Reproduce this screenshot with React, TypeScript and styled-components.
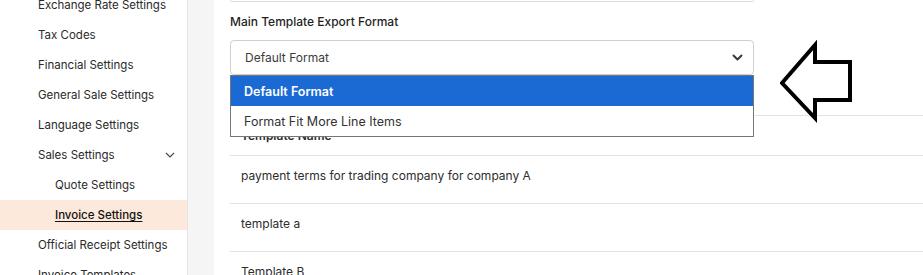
import React from 'react';
import styled, { createGlobalStyle } from 'styled-components';

const GlobalStyle = createGlobalStyle`
  html, body {
    margin: 0;
    padding: 0;
    background: #ffffff;
    overflow: hidden;
  }
  body {
    font-family: Inter, "Noto Sans", "Liberation Sans", sans-serif;
    color: #2d2d2d;
  }
`;

const Page = styled.div`
  display: flex;
  height: 275px;
  overflow: hidden;
`;

const Sidebar = styled.nav`
  width: 187px;
  flex-shrink: 0;
  border-right: 1px solid #e4e4e4;
  background: #fff;
  overflow: hidden;
`;

const NavList = styled.ul`
  list-style: none;
  margin: -10px 0 0;
  padding: 0;
`;

const NavItem = styled.li<{ $sub?: boolean; $active?: boolean }>`
  display: flex;
  align-items: center;
  justify-content: space-between;
  height: 30px;
  padding: 0 12px 0 ${(p) => (p.$sub ? '55px' : '38px')};
  font-size: 11.5px;
  color: ${(p) => (p.$active ? '#111' : '#2a2a2a')};
  font-weight: ${(p) => (p.$active ? 500 : 400)};
  text-decoration: ${(p) => (p.$active ? 'underline' : 'none')};
  text-underline-offset: 2px;
  background: ${(p) => (p.$active ? '#fde9db' : 'transparent')};
  white-space: nowrap;
`;

const Gutter = styled.div`
  width: 26px;
  flex-shrink: 0;
  background: #f5f5f5;
`;

const Panel = styled.main`
  position: relative;
  flex: 1;
  background: #fff;
  padding-left: 16px;
  min-width: 0;
`;

const PrevField = styled.div`
  width: 522px;
  height: 1px;
  border: 1px solid #dcdcdc;
  border-top: none;
  border-radius: 0 0 4px 4px;
`;

const Label = styled.div`
  margin-top: 12px;
  font-size: 12px;
  line-height: 16px;
  font-weight: 500;
  color: #1f1f1f;
`;

const SelectWrap = styled.div`
  position: relative;
  width: 524px;
  margin-top: 10px;
`;

const SelectBox = styled.div`
  display: flex;
  align-items: center;
  justify-content: space-between;
  height: 33px;
  padding: 0 10px 0 14px;
  border: 1px solid #cfcfcf;
  border-radius: 4px;
  font-size: 12px;
  color: #3c3c3c;
`;

const Menu = styled.ul`
  position: absolute;
  top: 35px;
  left: 0;
  width: 522px;
  margin: 0;
  padding: 0;
  list-style: none;
  background: #fff;
  border: 1px solid #767676;
  z-index: 5;
`;

const Option = styled.li<{ $selected?: boolean }>`
  height: 30px;
  display: flex;
  align-items: center;
  padding-left: 13px;
  font-size: 12.5px;
  font-weight: ${(p) => (p.$selected ? 600 : 400)};
  color: ${(p) => (p.$selected ? '#fff' : '#333')};
  background: ${(p) => (p.$selected ? '#1b69d3' : '#fff')};
`;

const Table = styled.div`
  margin-top: 40px;
  border-top: 1px solid #e2e2e2;
`;

const Row = styled.div<{ $head?: boolean }>`
  box-sizing: border-box;
  height: ${(p) => (p.$head ? '40px' : '48px')};
  padding: 12px 0 0 11px;
  line-height: 16px;
  border-bottom: 1px solid #e2e2e2;
  font-size: 12px;
  font-weight: ${(p) => (p.$head ? 600 : 400)};
  color: #2d2d2d;
`;

const Arrow = styled.svg`
  position: absolute;
  left: 566px;
  top: 40px;
`;

const Chevron = () => (
  <svg width="10" height="6" viewBox="0 0 10 6" fill="none">
    <path d="M1 1l4 4 4-4" stroke="#444" strokeWidth="1.1" />
  </svg>
);

const SelectChevron = () => (
  <svg width="11" height="7" viewBox="0 0 11 7" fill="none">
    <path d="M1.5 1.5l4 4 4-4" stroke="#3a3a3a" strokeWidth="2" strokeLinecap="round" strokeLinejoin="round" />
  </svg>
);

const navItems = [
  { label: 'Exchange Rate Settings' },
  { label: 'Tax Codes' },
  { label: 'Financial Settings' },
  { label: 'General Sale Settings' },
  { label: 'Language Settings' },
  { label: 'Sales Settings', open: true },
  { label: 'Quote Settings', sub: true },
  { label: 'Invoice Settings', sub: true, active: true },
  { label: 'Official Receipt Settings' },
  { label: 'Invoice Templates' },
];

const App = () => {
  return (
    <>
      <GlobalStyle />
      <Page>
        <Sidebar>
          <NavList>
            {navItems.map((item) => (
              <NavItem key={item.label} $sub={item.sub} $active={item.active}>
                <span>{item.label}</span>
                {item.open && <Chevron />}
              </NavItem>
            ))}
          </NavList>
        </Sidebar>
        <Gutter />
        <Panel>
          <PrevField />
          <Label>Main Template Export Format</Label>
          <SelectWrap>
            <SelectBox>
              <span>Default Format</span>
              <SelectChevron />
            </SelectBox>
            <Menu>
              <Option $selected>Default Format</Option>
              <Option>Format Fit More Line Items</Option>
            </Menu>
          </SelectWrap>
          <Table>
            <Row $head>Template Name</Row>
            <Row>payment terms for trading company for company A</Row>
            <Row>template a</Row>
            <Row>Template B</Row>
          </Table>
          <Arrow width="80" height="84" viewBox="0 0 80 84" fill="none">
            <path
              d="M2 43 L35 5 L35 22 L70 22 L70 60 L35 60 L35 78 Z"
              stroke="#000"
              strokeWidth="4"
              strokeLinejoin="miter"
              fill="#fff"
            />
          </Arrow>
        </Panel>
      </Page>
    </>
  );
};

export default App;
